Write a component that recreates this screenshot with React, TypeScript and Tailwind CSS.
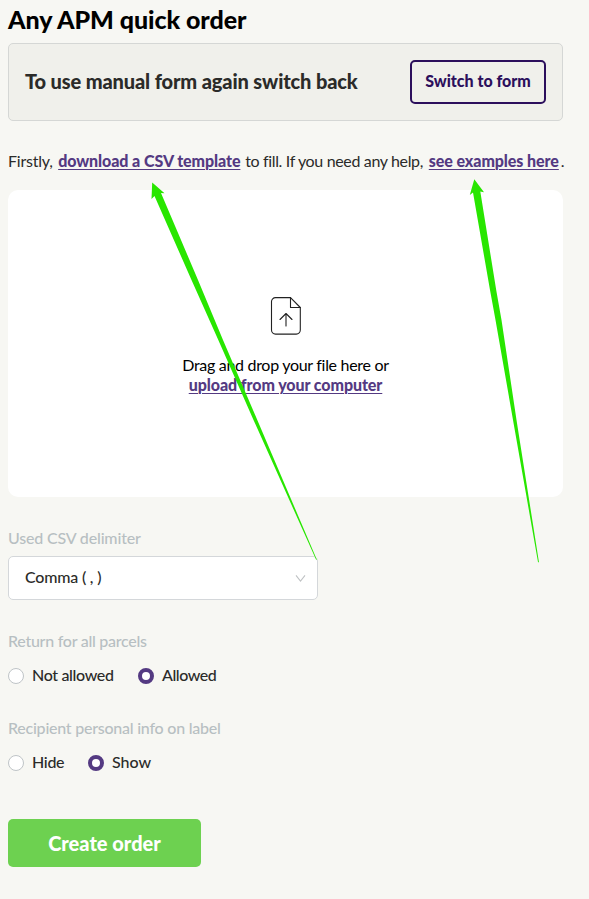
import { useState } from 'react'

const labelCls = 'block h-5 whitespace-nowrap text-[16px] leading-5 font-medium text-[#b7bfc2]'
const linkCls = 'font-black tracking-[-0.08px] text-[#543a82] underline decoration-1 underline-offset-[2px]'

type RadioOption = { value: string; label: string; textCls: string }

const RETURN_OPTIONS: RadioOption[] = [
  { value: 'no', label: 'Not allowed', textCls: 'w-[106px] tracking-[-0.34px]' },
  { value: 'yes', label: 'Allowed', textCls: 'w-[90px] tracking-[-0.45px]' },
]

const INFO_OPTIONS: RadioOption[] = [
  { value: 'hide', label: 'Hide', textCls: 'w-[56px] tracking-[-0.3px]' },
  { value: 'show', label: 'Show', textCls: 'w-[70px]' },
]

function RadioRow({ name, options, value, onChange }: {
  name: string
  options: RadioOption[]
  value: string
  onChange: (value: string) => void
}) {
  return (
    <div className="flex h-5 items-center gap-6">
      {options.map(opt => (
        <label key={opt.value} className={`flex items-center gap-2 whitespace-nowrap text-[16px] leading-5 font-medium text-[#2b2b29] ${opt.textCls}`}>
          <input
            type="radio" name={name} checked={value === opt.value}
            onChange={() => onChange(opt.value)}
            className="h-4 w-4 shrink-0 appearance-none rounded-full border border-[#bfc4c7] bg-white checked:border-4 checked:border-[#543a82]"
          />
          <span className="pb-0.5">{opt.label}</span>
        </label>
      ))}
    </div>
  )
}

function FileUploadIcon() {
  return (
    <svg width="32" height="40" viewBox="0 0 32 40" fill="none" stroke="#222" strokeWidth="1.1" strokeLinecap="round" strokeLinejoin="round">
      <path d="M20.500 1.600H5.500a4 4 0 0 0-4 4v28.500a4 4 0 0 0 4 4h20.800a4 4 0 0 0 4-4V11.500z" />
      <path d="M20.500 1.600v9.900h9.800" />
      <path d="M16 30V17.500M10 23.500l6-6 6 6" />
    </svg>
  )
}

export default function App() {
  const [returns, setReturns] = useState('yes')
  const [info, setInfo] = useState('show')

  return (
    <div className="relative h-[899px] w-[589px] overflow-hidden bg-[#f7f7f3] pt-[3px] pl-2 font-['Lato',sans-serif]">
      <h1 className="h-10 whitespace-nowrap text-[25px] leading-[32px] font-black tracking-[-0.05px] text-black">Any APM quick order</h1>

      <div className="flex h-[78px] w-[555px] items-center justify-between rounded-[5px] border border-[#d5d7d5] bg-[#f0f0eb] px-4">
        <p className="whitespace-nowrap pb-0.5 text-[20px] leading-6 font-black tracking-[-0.13px] text-[#2b2b29]">To use manual form again switch back</p>
        <button className="h-11 w-[136px] whitespace-nowrap rounded-[5px] border-2 border-[#2c0f5c] pb-0.5 text-[16px] font-black text-[#2c0f5c]">
          Switch to form
        </button>
      </div>

      <p className="mt-[30px] h-5 whitespace-nowrap text-[16px] leading-5 text-[#2b2b29]">
        <span className="mr-[1.5px] tracking-[-0.2px]">Firstly, </span>
        <a href="#" className={linkCls}>download a CSV template</a>
        <span className="mr-[2px] ml-px tracking-[-0.35px]"> to fill. If you need any help, </span>
        <a href="#" className={linkCls}>see examples here</a>
        <span className="ml-[2px]">.</span>
      </p>

      <div className="mt-[19px] flex h-[307px] w-[555px] flex-col items-center rounded-[10px] bg-white pt-[106px] text-[16px] leading-5 text-black">
        <FileUploadIcon />
        <p className="mt-[19px] tracking-[-0.3px]">Drag and drop your file here or</p>
        <a href="#" className={linkCls}>upload from your computer</a>
      </div>

      <label className={`${labelCls} mt-[31px] tracking-[-0.17px]`}>Used CSV delimiter</label>
      <button className="mt-2 flex h-11 w-[310px] items-center justify-between rounded-[5px] border border-[#d4d7da] bg-white pr-[11px] pl-4 text-[16px] font-medium text-[#2b2b29]">
        <span className="pb-0.5 tracking-[-0.2px]">Comma ( , )</span>
        <svg width="11" height="9" viewBox="0 0 12 10" fill="none" stroke="#bfc2c4" strokeWidth="1.2">
          <path d="M1 1.500l5 6.500 5-6.500" />
        </svg>
      </button>

      <span className={`${labelCls} mt-[31px] tracking-[-0.27px]`}>Return for all parcels</span>
      <div className="mt-[15px]">
        <RadioRow name="returns" options={RETURN_OPTIONS} value={returns} onChange={setReturns} />
      </div>

      <span className={`${labelCls} mt-8 tracking-[-0.24px]`}>Recipient personal info on label</span>
      <div className="mt-[15px]">
        <RadioRow name="info" options={INFO_OPTIONS} value={info} onChange={setInfo} />
      </div>

      <button className="mt-[46px] h-12 w-[193px] rounded-[5px] bg-[#6dd150] text-[20px] font-black text-white">
        Create order
      </button>

      {/* annotation arrows */}
      <svg className="pointer-events-none absolute inset-0" width="589" height="899" viewBox="0 0 589 899" fill="#28e600">
        <path d="M152.200 182.500L164.500 193.200L161 193L172.500 220L198 280L223 340L257.300 420L317 560L316 559.500L253.500 420L218.300 340L191.500 280L154.500 196L151.500 199z" />
        <path d="M474.300 179.300L484 192.200L480.300 191.500L496.200 290L501.500 320L516.500 420L539 562.500L538 562L513 420L495.500 320L490 290L473 192.500L469.800 195z" />
      </svg>
    </div>
  )
}
